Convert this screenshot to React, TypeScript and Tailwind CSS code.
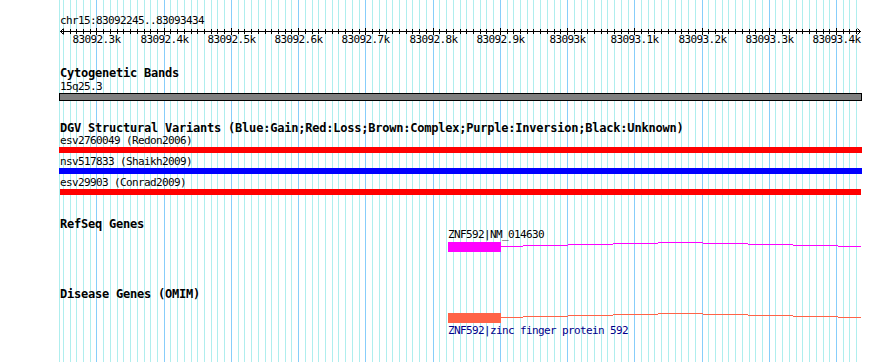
import React from "react";

const START = 83092245;
const SCALE = 800 / 1190;
const xOf = (bp: number) => Math.floor(60 + (bp - START) * SCALE);

const gridBps: number[] = [];
for (let bp = 83092250; bp <= 83093430; bp += 10) gridBps.push(bp);

const majorLabels: [number, string][] = [
  [83092300, "83092.3k"],
  [83092400, "83092.4k"],
  [83092500, "83092.5k"],
  [83092600, "83092.6k"],
  [83092700, "83092.7k"],
  [83092800, "83092.8k"],
  [83092900, "83092.9k"],
  [83093000, "83093k"],
  [83093100, "83093.1k"],
  [83093200, "83093.2k"],
  [83093300, "83093.3k"],
  [83093400, "83093.4k"],
];

const small = "font-['DejaVu_Sans_Mono',monospace] text-[11px] tracking-[-0.62px] leading-[12px] h-[12px] whitespace-nowrap";
const bold = "font-['DejaVu_Sans_Mono',monospace] font-bold text-[12px] tracking-[-0.22px] leading-[12px] h-[12px] whitespace-nowrap text-black";

function Grid() {
  return (
    <svg className="absolute inset-0" width={890} height={362} shapeRendering="crispEdges">
      <rect x={59} y={0} width={1} height={362} fill="#afeeee" />
      {gridBps.map((bp) => (
        <rect key={bp} x={xOf(bp)} y={0} width={1} height={362} fill={bp % 100 === 0 ? "#87cefa" : "#afeeee"} />
      ))}
    </svg>
  );
}

function Ruler() {
  return (
    <svg width={890} height={17} className="block">
      <g shapeRendering="crispEdges">
        <rect x={60} y={3} width={801} height={1} fill="#000" />
        {gridBps.map((bp) => (
          <rect key={bp} x={xOf(bp)} y={bp % 100 === 0 ? 0 : 1} width={1} height={bp % 100 === 0 ? 7 : 5} fill="#000" />
        ))}
      </g>
      <polyline points="63.5,0.5 60.5,3.5 63.5,6.5" fill="none" stroke="#000" strokeWidth={1} />
      <polyline points="857.5,0.5 860.5,3.5 857.5,6.5" fill="none" stroke="#000" strokeWidth={1} />
      {majorLabels.map(([bp, label]) => (
        <text
          key={bp}
          x={xOf(bp) + 0.5}
          y={15}
          textAnchor="middle"
          fontFamily="'DejaVu Sans Mono', monospace"
          fontSize={11}
          letterSpacing={-0.62}
          fill="#000"
        >
          {label}
        </text>
      ))}
    </svg>
  );
}

const refSteps = [
  [501, 523, 5],
  [523, 568, 4],
  [568, 613, 3],
  [613, 658, 2],
  [658, 703, 1],
  [703, 748, 2],
  [748, 793, 3],
  [793, 838, 4],
  [838, 861, 5],
];

function GeneGlyph({ color }: { color: string }) {
  return (
    <svg width={414} height={12} className="block" shapeRendering="crispEdges">
      <rect x={0} y={1} width={53} height={10} fill={color} />
      {refSteps.map(([a, b, y]) => (
        <rect key={a} x={a - 448} y={y} width={b - a} height={1} fill={color} />
      ))}
    </svg>
  );
}

export default function App() {
  return (
    <div className="relative w-[890px] h-[362px] bg-white overflow-hidden">
      <Grid />
      <div className="relative flex flex-col">
        <div className={`${small} pl-[60px] mt-[15px] text-black`}>chr15:83092245..83093434</div>
        <div className="mt-[1px]">
          <Ruler />
        </div>

        <div className={`${bold} pl-[60px] mt-[22px]`}>Cytogenetic Bands</div>
        <div className={`${small} pl-[60px] mt-[2px] text-black`}>15q25.3</div>
        <div className="ml-[59px] w-[803px] h-[8px] border border-black bg-[#808080]" />

        <div className={`${bold} pl-[60px] mt-[21px]`}>
          DGV Structural Variants (Blue:Gain;Red:Loss;Brown:Complex;Purple:Inversion;Black:Unknown)
        </div>
        <div className={`${small} pl-[60px] mt-[1px] text-black`}>esv2760049 (Redon2006)</div>
        <div className="ml-[59px] w-[803px] h-[6px] bg-[#ff0000]" />
        <div className={`${small} pl-[60px] mt-[3px] text-black`}>nsv517833 (Shaikh2009)</div>
        <div className="ml-[59px] w-[803px] h-[6px] bg-[#0000ff]" />
        <div className={`${small} pl-[60px] mt-[3px] text-black`}>esv29903 (Conrad2009)</div>
        <div className="ml-[60px] w-[801px] h-[6px] bg-[#ff0000]" />

        <div className={`${bold} pl-[60px] mt-[23px] !h-[11px]`}>RefSeq Genes</div>
        <div className="pl-[448px]">
          <div className={`${small} text-black`}>ZNF592|NM_014630</div>
          <GeneGlyph color="#ff00ff" />
        </div>

        <div className={`${bold} pl-[60px] mt-[35px]`}>Disease Genes (OMIM)</div>
        <div className="pl-[448px] mt-[12px]">
          <GeneGlyph color="#ff6347" />
          <div className={`${small} mt-[1px] text-[#00008b]`}>ZNF592|zinc finger protein 592</div>
        </div>
      </div>
    </div>
  );
}
